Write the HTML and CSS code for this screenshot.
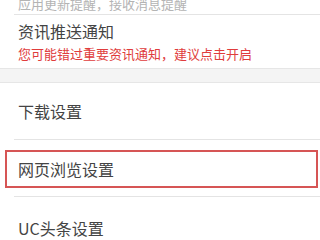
FILE: index.html
```html
<!DOCTYPE html>
<html lang="zh-CN">
<head>
<meta charset="utf-8">
<link rel="stylesheet" href="styles.css">
</head>
<body>
<div class="page">
  <div class="sub-top">应用更新提醒，接收消息提醒</div>
  <div class="divider"></div>
  <div class="push">
    <div class="title">资讯推送通知</div>
    <div class="warn">您可能错过重要资讯通知，建议点击开启</div>
  </div>
  <div class="band"></div>
  <div class="row"><span class="title">下载设置</span></div>
  <div class="divider"></div>
  <div class="row boxed-row"><div class="box"><span class="title">网页浏览设置</span></div></div>
  <div class="divider"></div>
  <div class="last"><span class="title">UC头条设置</span></div>
</div>
</body>
</html>
```
FILE: styles.css
```css
html, body { margin: 0; padding: 0; background: #fff; }
body { font-family: "Noto Sans CJK SC", "Noto Sans", sans-serif; width: 320px; height: 240px; overflow: hidden; }
.page { display: flex; flex-direction: column; }
.sub-top { height: 14px; padding-left: 18px; font-size: 13px; line-height: 8px; color: #b4b4b4; overflow: hidden; }
.divider { height: 1px; background: #e4e4e4; margin-left: 14px; }
.title { font-size: 16px; color: #444; line-height: 22px; }
.push { display: flex; flex-direction: column; padding: 5px 0 6px 18px; height: 42px; }
.warn { font-size: 13px; line-height: 20px; color: #e03c3c; margin-top: 2px; }
.band { height: 13px; background: #f4f4f4; border-top: 1px solid #e6e6e6; border-bottom: 1px solid #e6e6e6; }
.row { height: 56px; display: flex; align-items: center; padding-left: 18px; }
.boxed-row { padding-left: 5px; padding-right: 2px; }
.box { flex: 1; height: 34px; border: 2px solid #d65555; display: flex; align-items: center; padding-left: 11px; margin-top: 1px; }
.last { height: 23px; padding: 20px 0 0 18px; display: flex; align-items: flex-start; }
```
